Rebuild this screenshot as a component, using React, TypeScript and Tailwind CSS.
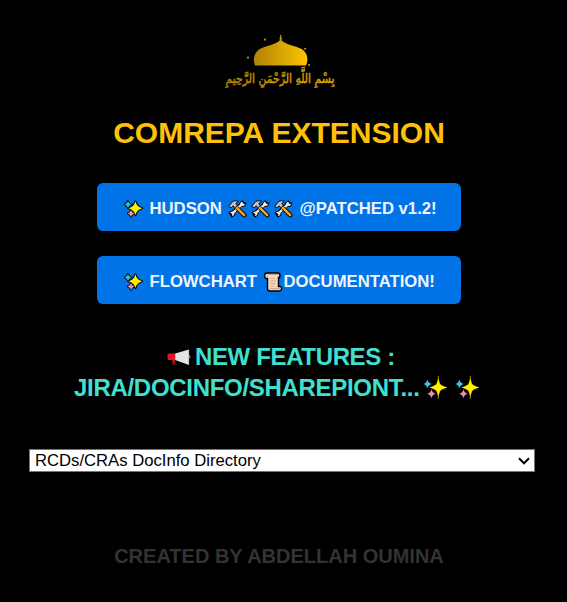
import React from "react";

const star = (x: number, y: number, r: number) =>
  `M${x} ${y - r}Q${x + r * 0.18} ${y - r * 0.18} ${x + r} ${y}Q${x + r * 0.18} ${y + r * 0.18} ${x} ${y + r}Q${x - r * 0.18} ${y + r * 0.18} ${x - r} ${y}Q${x - r * 0.18} ${y - r * 0.18} ${x} ${y - r}Z`;

function SmallSparkles() {
  return (
    <svg viewBox="0 0 19 20" className="h-5 w-[19px] shrink-0" strokeLinejoin="round">
      <g fill="#000" stroke="#000" strokeWidth="2.2">
        <path d={star(4, 5.5, 3.3)} />
        <path d={star(7, 14.5, 3)} />
        <path d={star(11.4, 9.3, 6.8)} />
      </g>
      <path d={star(4, 5.5, 3.5)} fill="#30c5d8" />
      <path d={star(7, 14.5, 3.4)} fill="#f18cad" />
      <path d={star(11.4, 9.3, 7)} fill="#fff000" />
    </svg>
  );
}

function BigSparkles() {
  return (
    <svg viewBox="0 0 26 26" className="h-[26px] w-[26px] shrink-0">
      <path d={star(4.5, 9, 4.5)} fill="#3ac4ef" />
      <path d={star(8.5, 18.7, 4.5)} fill="#f38bb5" />
      <path d="M15.300 1V23.500M7 12.500H24" stroke="#aaa000" strokeWidth="1" />
      <path d="M15.300 4.500Q16.500 9.500 18.500 10.500L23 12.500L18.500 14.500Q16.500 15.500 15.300 20.500Q14.100 15.500 12.100 14.500L7.600 12.500L12.100 10.500Q14.100 9.500 15.300 4.500Z" fill="#fff100" stroke="#fff100" strokeWidth=".6" />
    </svg>
  );
}

function Tools() {
  return (
    <svg viewBox="0 0 19 20" className="h-5 w-[19px] shrink-0" strokeLinecap="round" strokeLinejoin="round">
      <path d="M3.600 14.900L14.500 4.200" stroke="#000" strokeWidth="4.200" />
      <path d="M11.900 4L14.300 1.500L15 3.700L16 4.500L18 3.800L16.500 7.200L12.800 7.600ZM1.200 13.400L4.200 11.900L6.900 12.800L6.800 16.300L3.500 18L3.800 15.500Z" fill="#e9e9e9" stroke="#000" strokeWidth="1" />
      <path d="M5.500 13.500L13.500 5.700" stroke="#e9e9e9" strokeWidth="2.400" />
      <path d="M10 10L16.300 16.200" stroke="#000" strokeWidth="4.400" />
      <path d="M8 8L16.200 16.100" stroke="#f8a51b" strokeWidth="2.500" />
      <path d="M1 7L4.800 2.400Q7 1 10.500 2.300L7.700 4.500L9.300 6.700L7.100 8.700L5 6.800L3.200 8.700Z" fill="#c2c4c6" stroke="#000" strokeWidth=".9" />
    </svg>
  );
}

function Scroll() {
  return (
    <svg viewBox="0 0 21 20" className="h-5 w-[21px] shrink-0">
      <path d="M3.500 1H14.500Q17 1 17 3.500L16.500 5.500H15.500V14.500H17.500Q19.500 16 18 18L16.500 19H6.500Q4.500 18.500 4.500 16.500V6.500H3Q1.500 5.500 1.500 3.500Q1.500 1.500 3.500 1Z" fill="#f8d5c0" stroke="#000" strokeWidth="1.400" />
      <path d="M3 2.500Q5 3 4.500 6M5 2.500H15M6.500 16.700H17" fill="none" stroke="#c9a18d" strokeWidth="1" />
      <path d="M7 6.500H13M7 9H13M7 11.500H13M7 14H12" stroke="#d4ad98" strokeWidth=".9" />
    </svg>
  );
}

function Megaphone() {
  return (
    <svg viewBox="0 0 24 20" className="h-5 w-6 shrink-0">
      <path d="M4 11H8.300V17.500H5.700L5 13Z" fill="#a80e1b" />
      <path d="M.5 7.500L1.500 6.500H8.500V13H1.500L.5 12Z" fill="#e81224" />
      <path d="M21 8H22.500L23.500 9V10.500L22.500 11.500H21Z" fill="#777" />
      <path d="M8.200 6.500L22 2.500V18L8.200 13Z" fill="#e4e4e4" />
      <path d="M21.700 2.700V17.700" stroke="#aaa" strokeWidth=".7" />
    </svg>
  );
}

function Logo() {
  return (
    <svg viewBox="0 0 120 64" className="mt-7 h-16 w-[120px] overflow-visible" role="img">
      <defs>
        <linearGradient id="gold" x1="0" x2="1">
          <stop offset="0" stopColor="#ae8205" />
          <stop offset="1" stopColor="#ffc400" />
        </linearGradient>
        <linearGradient id="script" gradientUnits="userSpaceOnUse" x1="6" x2="115" y1="0" y2="0">
          <stop offset="0" stopColor="#b08200" />
          <stop offset="1" stopColor="#e0a800" />
        </linearGradient>
      </defs>
      <path d="M36 37.500C33.500 30.500 35.500 25 40 21.500C45.500 17.500 59.500 16.500 61.200 11.500L61.700 6L62.200 11.500C63.900 16.500 77.500 17.500 83.500 21.500C88 25 90 30.500 87 37.500Z" fill="url(#gold)" />
      <path d="M61.700 7V14" stroke="#c08d00" strokeWidth="1.200" />
      <circle cx="61.700" cy="10.500" r="1.200" fill="#c08d00" />
      <g fill="#b98900">
        <circle cx="46" cy="11.700" r="1.100" />
        <circle cx="29" cy="29.700" r="1.100" />
        <circle cx="86" cy="20.800" r="1.100" />
        <circle cx="90" cy="36.900" r="1.100" />
      </g>
      <text x="61" y="54.500" direction="rtl" textAnchor="middle" textLength="109" lengthAdjust="spacingAndGlyphs" fill="url(#script)" stroke="url(#script)" strokeWidth=".45" fontSize="13" className="font-['DejaVu_Sans',sans-serif]">
        بِسْمِ اللَّهِ الرَّحْمَنِ الرَّحِيمِ
      </text>
    </svg>
  );
}

export default function App() {
  return (
    <main className="flex h-[602px] w-[567px] flex-col items-center overflow-hidden bg-black pr-[9px] font-['Liberation_Sans',Arial,sans-serif]">
      <Logo />
      <h1 className="mt-[24px] h-[34px] text-[30px] leading-[34px] font-bold whitespace-nowrap text-[#ffc107]">COMREPA EXTENSION</h1>
      <button className="mt-[33px] mr-px flex h-12 w-[364px] items-center rounded-md bg-[#0073e6] pt-[3px] pl-[27px] text-[16.7px] font-bold whitespace-pre text-[#f0f4ff]">
        <SmallSparkles />
        <span className="ml-[7px] w-[78px] text-left">HUDSON</span>
        <span className="flex gap-[4px]"><Tools /><Tools /><Tools /></span>
        <span className="ml-[7px]">@PATCHED v1.2!</span>
      </button>
      <button className="mt-[25px] mr-px flex h-12 w-[364px] items-center rounded-md bg-[#0073e6] pt-[3px] pl-[27px] text-[16.7px] font-bold whitespace-pre text-[#f0f4ff]">
        <SmallSparkles />
        <span className="ml-[7px] w-[113px] text-left">FLOWCHART</span>
        <Scroll />
        <span>DOCUMENTATION!</span>
      </button>
      <h2 className="mt-[37px] flex w-full flex-col text-2xl leading-[31px] font-bold whitespace-nowrap text-[#40e0d0]">
        <span className="flex h-[31px] items-center pl-[167px]"><Megaphone /><span className="ml-[4px] tracking-[-0.36px]">NEW FEATURES :</span></span>
        <span className="flex h-[31px] items-center pl-[74px]"><span className="w-[349px] tracking-[-0.3px]">JIRA/DOCINFO/SHAREPIONT...</span><BigSparkles /><span className="w-[6px]" /><BigSparkles /></span>
      </h2>
      <div className="mt-[46px] ml-[6px] flex h-[23px] w-[506px] items-center justify-between border border-[#767676] bg-white pr-1 pl-[5px] text-[16.67px] leading-5 text-black">
        <span>RCDs/CRAs DocInfo Directory</span>
        <svg viewBox="0 0 12 8" className="h-2 w-3" fill="none" stroke="#000" strokeWidth="2">
          <path d="M1 1.300L6 6.300L11 1.300" />
        </svg>
      </div>
      <footer className="mt-[72px] text-xl leading-6 font-bold text-[#333]">CREATED BY ABDELLAH OUMINA</footer>
    </main>
  );
}
